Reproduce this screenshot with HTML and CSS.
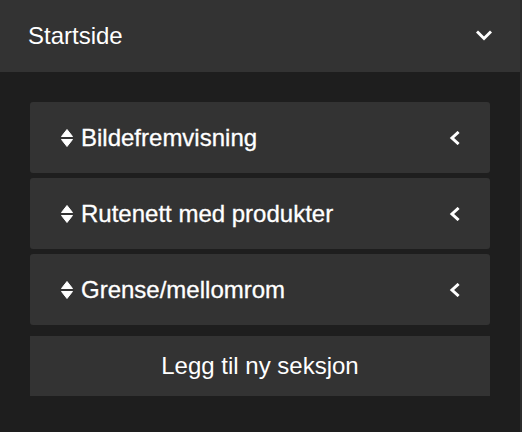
FILE: index.html
```html
<!DOCTYPE html>
<html lang="no">
<head>
    <meta charset="UTF-8">
    <meta name="viewport" content="width=device-width, initial-scale=1.0">
    <title>Startside</title>
    <link rel="stylesheet" href="styles.css">
</head>
<body>
    <div class="panel">
        <div class="panel-header">
            <span class="panel-title">Startside</span>
            <svg class="chev-down" viewBox="0 0 16 11" width="16" height="11">
                <path d="M2 2.5 L8 8.5 L14 2.5" fill="none" stroke="#fff" stroke-width="3" stroke-linecap="square" stroke-linejoin="miter"/>
            </svg>
        </div>
        <div class="panel-body">
            <div class="section">
                <svg class="sort" viewBox="0 0 12 18" width="12" height="18">
                    <path d="M6 0.5 L11.5 7.5 L0.5 7.5 Z M6 17.5 L11.5 10.5 L0.5 10.5 Z" fill="#fff" stroke="#fff" stroke-width="1" stroke-linejoin="round"/>
                </svg>
                <span class="section-name">Bildefremvisning</span>
                <svg class="chev-left" viewBox="0 0 11 14" width="11" height="14">
                    <path d="M8.5 2 L3 7 L8.5 12" fill="none" stroke="#fff" stroke-width="3" stroke-linecap="square"/>
                </svg>
            </div>
            <div class="section">
                <svg class="sort" viewBox="0 0 12 18" width="12" height="18">
                    <path d="M6 0.5 L11.5 7.5 L0.5 7.5 Z M6 17.5 L11.5 10.5 L0.5 10.5 Z" fill="#fff" stroke="#fff" stroke-width="1" stroke-linejoin="round"/>
                </svg>
                <span class="section-name">Rutenett med produkter</span>
                <svg class="chev-left" viewBox="0 0 11 14" width="11" height="14">
                    <path d="M8.5 2 L3 7 L8.5 12" fill="none" stroke="#fff" stroke-width="3" stroke-linecap="square"/>
                </svg>
            </div>
            <div class="section">
                <svg class="sort" viewBox="0 0 12 18" width="12" height="18">
                    <path d="M6 0.5 L11.5 7.5 L0.5 7.5 Z M6 17.5 L11.5 10.5 L0.5 10.5 Z" fill="#fff" stroke="#fff" stroke-width="1" stroke-linejoin="round"/>
                </svg>
                <span class="section-name">Grense/mellomrom</span>
                <svg class="chev-left" viewBox="0 0 11 14" width="11" height="14">
                    <path d="M8.5 2 L3 7 L8.5 12" fill="none" stroke="#fff" stroke-width="3" stroke-linecap="square"/>
                </svg>
            </div>
            <button class="add-section">Legg til ny seksjon</button>
        </div>
    </div>
</body>
</html>
```

FILE: styles.css
```css
body {
    margin: 0;
    width: 522px;
    height: 432px;
    overflow: hidden;
    background-color: #1e1e1e;
    font-family: "Liberation Sans", Arial, sans-serif;
    color: #fff;
}
.panel {
    width: 520px;
    height: 432px;
    border-right: 2px solid #2c2c2c;
    background-color: #1e1e1e;
}
.panel-header {
    height: 72px;
    background-color: #333;
    display: flex;
    align-items: center;
    justify-content: space-between;
    padding: 0 28px 0 28px;
}
.panel-title {
    font-size: 24px;
    line-height: 28px;
}
.chev-down {
    display: block;
    margin-top: -2px;
}
.panel-body {
    padding: 30px 30px 0 30px;
    display: flex;
    flex-direction: column;
    gap: 5px;
}
.section {
    height: 71px;
    background-color: #333;
    border-radius: 3px;
    display: flex;
    align-items: center;
    padding: 0 30px 0 31px;
}
.sort {
    display: block;
    margin-right: 8px;
    flex-shrink: 0;
}
.section-name {
    font-size: 24px;
    line-height: 28px;
    flex: 1;
    -webkit-text-stroke: 0.3px #fff;
}
.chev-left {
    display: block;
}
.add-section {
    margin-top: 6px;
    height: 60px;
    border: none;
    border-radius: 0;
    background-color: #333;
    color: #fff;
    font-family: "Liberation Sans", Arial, sans-serif;
    font-size: 24px;
    cursor: pointer;
}
```
